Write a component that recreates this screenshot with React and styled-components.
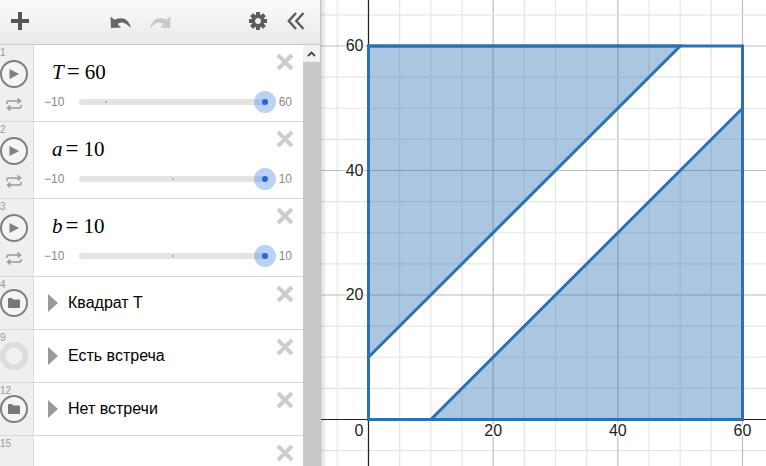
import React from 'react'
import styled, { createGlobalStyle } from 'styled-components'

const GlobalStyle = createGlobalStyle`
  html, body { margin: 0; padding: 0; height: 100%; overflow: hidden; }
  body { font-family: "Liberation Sans", Arial, sans-serif; background: #fff; }
`

const Page = styled.div`
  display: flex;
  width: 766px;
  height: 466px;
  overflow: hidden;
`

const Sidebar = styled.aside`
  display: flex;
  flex-direction: column;
  flex: none;
  width: 321px;
  border-right: 1px solid #c4c4c4;
  box-sizing: border-box;
`

const Toolbar = styled.div`
  display: flex;
  align-items: center;
  flex: none;
  height: 45px;
  box-sizing: border-box;
  padding: 0 15px 2px 11px;
  background: linear-gradient(#fbfbfb, #e9e9e9);
  border-bottom: 1px solid #c9c9c9;
`

const UndoGroup = styled.div`
  display: flex;
  gap: 17px;
  margin: 0 auto 0 81px;
`

const ToolRight = styled.div`
  display: flex;
  align-items: center;
  gap: 20px;
`

const Content = styled.div`
  display: flex;
  flex: 1;
  min-height: 0;
`

const List = styled.div`
  flex: 1;
  min-width: 0;
`

const Scrollbar = styled.div`
  display: flex;
  flex-direction: column;
  flex: none;
  width: 17px;
`

const ScrollUp = styled.div`
  display: flex;
  justify-content: center;
  align-items: center;
  height: 17px;
  background: #f1f1f1;
`

const ScrollThumb = styled.div`
  flex: 1;
  background: #c8c8c8;
`

const Row = styled.div`
  display: flex;
  height: ${p => p.$h}px;
  box-sizing: border-box;
  border-bottom: 1px solid #d8d8d8;
`

const Gutter = styled.div`
  position: relative;
  display: flex;
  flex-direction: column;
  align-items: center;
  flex: none;
  width: 34px;
  box-sizing: border-box;
  padding: ${p => p.$top}px 5px 0 0;
  gap: 10px;
  background: #efefef;
  border-right: 1px solid #e0e0e0;
`

const RowNumber = styled.span`
  position: absolute;
  left: 0;
  top: 2px;
  font-size: 10px;
  line-height: 11px;
  color: #999;
`

const RowBody = styled.div`
  position: relative;
  flex: 1;
  min-width: 0;
`

const Close = styled.div`
  position: absolute;
  right: 9px;
  top: 8px;
  display: flex;
`

const MathLine = styled.div`
  display: flex;
  align-items: baseline;
  padding: 15px 0 0 18px;
  height: 29px;
  font-family: "Liberation Serif", "Times New Roman", serif;
  font-size: 21px;
  line-height: 24px;
  color: #000;
`

const MathVar = styled.i`
  font-style: italic;
`

const MathEquals = styled.span`
  margin: 0 5px 0 3px;
  font-size: 23px;
`

const SliderLine = styled.div`
  display: flex;
  align-items: center;
  padding: 0 11px 0 10px;
  margin-top: 2px;
  height: 22px;
  font-size: 12px;
  color: #888;
`

const MinLabel = styled.span`
  flex: none;
  width: 35px;
`

const Track = styled.div`
  position: relative;
  flex: 1;
  height: 6px;
  margin-right: 13px;
  border-radius: 3px;
  background: #e4e4e4;
`

const Tick = styled.span`
  position: absolute;
  left: ${p => p.$at}%;
  top: 2px;
  width: 2px;
  height: 2px;
  background: #b8b8b8;
`

const Handle = styled.span`
  position: absolute;
  right: -10px;
  top: -8px;
  display: flex;
  align-items: center;
  justify-content: center;
  width: 22px;
  height: 22px;
  border-radius: 50%;
  background: rgba(92, 145, 230, 0.42);

  &::after {
    content: "";
    width: 6px;
    height: 6px;
    border-radius: 50%;
    background: #2467d8;
  }
`

const FolderLine = styled.div`
  display: flex;
  align-items: center;
  gap: 10px;
  height: 52px;
  padding: 0 0 0 14px;
  font-size: 16px;
  color: #000;
`

const Caret = styled.span`
  flex: none;
  width: 0;
  height: 0;
  border-top: 9px solid transparent;
  border-bottom: 9px solid transparent;
  border-left: 10px solid #999;
`

const Circle = styled.div`
  display: flex;
  align-items: center;
  justify-content: center;
  flex: none;
  width: 28px;
  height: 28px;
  box-sizing: border-box;
  border-radius: 50%;
  border: 2px solid #7f7f7f;
  background: #f4f4f4;
`

const Ring = styled.div`
  flex: none;
  width: 28px;
  height: 28px;
  box-sizing: border-box;
  border-radius: 50%;
  border: 5px solid #dcdcdc;
  background: #f1f1f1;
  box-shadow: inset 0 0 2px #cfcfcf, 0 0 1px #e2e2e2;
`

const GraphPane = styled.div`
  position: relative;
  flex: 1;
  min-width: 0;

  &::before {
    content: "";
    position: absolute;
    left: 0;
    top: 0;
    bottom: 0;
    width: 6px;
    background: linear-gradient(to right, rgba(0, 0, 0, 0.14), rgba(0, 0, 0, 0));
  }
`

const GraphSvg = styled.svg`
  display: block;
  font-family: "Liberation Sans", Arial, sans-serif;
  font-size: 16px;
`

function CloseIcon() {
  return (
    <svg width="18" height="18" viewBox="0 0 18 18">
      <path d="M2 2 L16 16 M16 2 L2 16" stroke="#cdcdcd" strokeWidth="4" fill="none" />
    </svg>
  )
}

function PlayIcon() {
  return (
    <svg width="12" height="12" viewBox="0 0 12 12">
      <path d="M1.5 1 L11 6 L1.5 11 Z" fill="#808080" />
    </svg>
  )
}

function FolderIcon() {
  return (
    <svg width="12" height="10" viewBox="0 0 12 10">
      <path d="M0 1 Q0 0 1 0 H4 L5 1.5 H11 Q12 1.5 12 2.5 V9 Q12 10 11 10 H1 Q0 10 0 9 Z" fill="#777" />
    </svg>
  )
}

function RepeatIcon() {
  return (
    <svg width="16" height="13" viewBox="0 0 16 13" fill="none" stroke="#9a9a9a" strokeWidth="1.5">
      <path d="M1 6 V4.5 Q1 3 2.5 3 H14 M11.5 0.5 L14.5 3 L11.5 5.5" />
      <path d="M15 7 V8.5 Q15 10 13.5 10 H2 M4.5 7.5 L1.5 10 L4.5 12.5" />
    </svg>
  )
}

function UndoIcon({ color, flip }) {
  return (
    <svg width="22" height="15" viewBox="0 0 22 15" style={flip ? { transform: 'scaleX(-1)' } : undefined}>
      <path d="M0.5 2.5 L1 14 L11 13.5 L7.5 10 Q13 5.5 21 14 Q17.5 0.5 4.5 5.8 Z" fill={color} />
    </svg>
  )
}

function GearIcon() {
  const teeth = [0, 45, 90, 135, 180, 225, 270, 315]
  return (
    <svg width="18" height="18" viewBox="0 0 18 18">
      {teeth.map(a => (
        <rect key={a} x="7" y="0" width="4" height="18" rx="0.6" fill="#5c5c5c" transform={`rotate(${a} 9 9)`} />
      ))}
      <circle cx="9" cy="9" r="6.5" fill="#5c5c5c" />
      <circle cx="9" cy="9" r="2.9" fill="#f1f1f1" />
    </svg>
  )
}

function ChevronsIcon() {
  return (
    <svg width="18" height="18" viewBox="0 0 18 18" fill="none" stroke="#5c5c5c" strokeWidth="2.4">
      <path d="M9 1 L1.8 9 L9 17" />
      <path d="M16.5 1 L9.3 9 L16.5 17" />
    </svg>
  )
}

function SliderRow({ h, num, name, value, tick }) {
  return (
    <Row $h={h}>
      <Gutter $top={15}>
        <RowNumber>{num}</RowNumber>
        <Circle><PlayIcon /></Circle>
        <RepeatIcon />
      </Gutter>
      <RowBody>
        <Close><CloseIcon /></Close>
        <MathLine>
          <MathVar>{name}</MathVar>
          <MathEquals>=</MathEquals>
          <span>{value}</span>
        </MathLine>
        <SliderLine>
          <MinLabel>−10</MinLabel>
          <Track>
            <Tick $at={tick} />
            <Handle />
          </Track>
          <span>{value}</span>
        </SliderLine>
      </RowBody>
    </Row>
  )
}

function FolderRow({ num, label, ring }) {
  return (
    <Row $h={53}>
      <Gutter $top={12}>
        <RowNumber>{num}</RowNumber>
        {ring ? <Ring /> : <Circle><FolderIcon /></Circle>}
      </Gutter>
      <RowBody>
        <Close><CloseIcon /></Close>
        <FolderLine>
          <Caret />
          <span>{label}</span>
        </FolderLine>
      </RowBody>
    </Row>
  )
}

const ORIGIN_X = 47.5
const ORIGIN_Y = 419.5
const UNIT_X = 374 / 60
const UNIT_Y = 373.5 / 60
const WIDTH = 446
const HEIGHT = 466

const sx = v => ORIGIN_X + v * UNIT_X
const sy = v => ORIGIN_Y - v * UNIT_Y
const pts = list => list.map(([x, y]) => `${sx(x)},${sy(y)}`).join(' ')
const steps = [-10, -5, 0, 5, 10, 15, 20, 25, 30, 35, 40, 45, 50, 55, 60, 65, 70]

const BLUE = '#2d70b3'

function Graph() {
  return (
    <GraphSvg width={WIDTH} height={HEIGHT} viewBox={`0 0 ${WIDTH} ${HEIGHT}`}>
      {steps.map(v => (
        <g key={v}>
          <line x1={sx(v)} x2={sx(v)} y1="0" y2={HEIGHT} stroke={v % 20 === 0 ? '#bcbcbc' : '#e6e6e6'} strokeWidth="1.2" />
          <line x1="0" x2={WIDTH} y1={sy(v)} y2={sy(v)} stroke={v % 20 === 0 ? '#bcbcbc' : '#e6e6e6'} strokeWidth="1.2" />
        </g>
      ))}
      <line x1={ORIGIN_X} x2={ORIGIN_X} y1="0" y2={HEIGHT} stroke="#222" strokeWidth="1.2" />
      <line x1="0" x2={WIDTH} y1={ORIGIN_Y} y2={ORIGIN_Y} stroke="#222" strokeWidth="1.2" />

      <polygon points={pts([[0, 10], [0, 60], [50, 60]])} fill={BLUE} fillOpacity="0.4" stroke={BLUE} strokeWidth="3" />
      <polygon points={pts([[10, 0], [60, 0], [60, 50]])} fill={BLUE} fillOpacity="0.4" stroke={BLUE} strokeWidth="3" />
      <polygon points={pts([[0, 0], [60, 0], [60, 60], [0, 60]])} fill="none" stroke={BLUE} strokeWidth="3" />

      {[[sx(20), 20], [sx(40), 40], [sx(60), 60]].map(([x, v]) => (
        <text key={v} x={x} y={ORIGIN_Y + 16} textAnchor="middle" fill="#222" stroke="#fff" strokeWidth="3" paintOrder="stroke">{v}</text>
      ))}
      <text x={ORIGIN_X - 5} y={ORIGIN_Y + 16} textAnchor="end" fill="#222" stroke="#fff" strokeWidth="3" paintOrder="stroke">0</text>
      {[20, 40, 60].map(v => (
        <text key={v} x={ORIGIN_X - 5} y={sy(v) + 5} textAnchor="end" fill="#222" stroke="#fff" strokeWidth="3" paintOrder="stroke">{v}</text>
      ))}
    </GraphSvg>
  )
}

export default function App() {
  return (
    <Page>
      <GlobalStyle />
      <Sidebar>
        <Toolbar>
          <svg width="18" height="18" viewBox="0 0 18 18">
            <path d="M9 0 V18 M0 9 H18" stroke="#555" strokeWidth="4" />
          </svg>
          <UndoGroup>
            <UndoIcon color="#666" />
            <UndoIcon color="#c9c9c9" flip />
          </UndoGroup>
          <ToolRight>
            <GearIcon />
            <ChevronsIcon />
          </ToolRight>
        </Toolbar>
        <Content>
          <List>
            <SliderRow h={77} num="1" name="T" value="60" tick={14} />
            <SliderRow h={77} num="2" name="a" value="10" tick={50} />
            <SliderRow h={78} num="3" name="b" value="10" tick={50} />
            <FolderRow num="4" label="Квадрат Т" />
            <FolderRow num="9" label="Есть встреча" ring />
            <FolderRow num="12" label="Нет встречи" />
            <Row $h={31}>
              <Gutter $top={0}><RowNumber>15</RowNumber></Gutter>
              <RowBody><Close><CloseIcon /></Close></RowBody>
            </Row>
          </List>
          <Scrollbar>
            <ScrollUp>
              <svg width="9" height="6" viewBox="0 0 9 6" fill="none" stroke="#444" strokeWidth="1.8">
                <path d="M1 5 L4.5 1.5 L8 5" />
              </svg>
            </ScrollUp>
            <ScrollThumb />
          </Scrollbar>
        </Content>
      </Sidebar>
      <GraphPane>
        <Graph />
      </GraphPane>
    </Page>
  )
}
